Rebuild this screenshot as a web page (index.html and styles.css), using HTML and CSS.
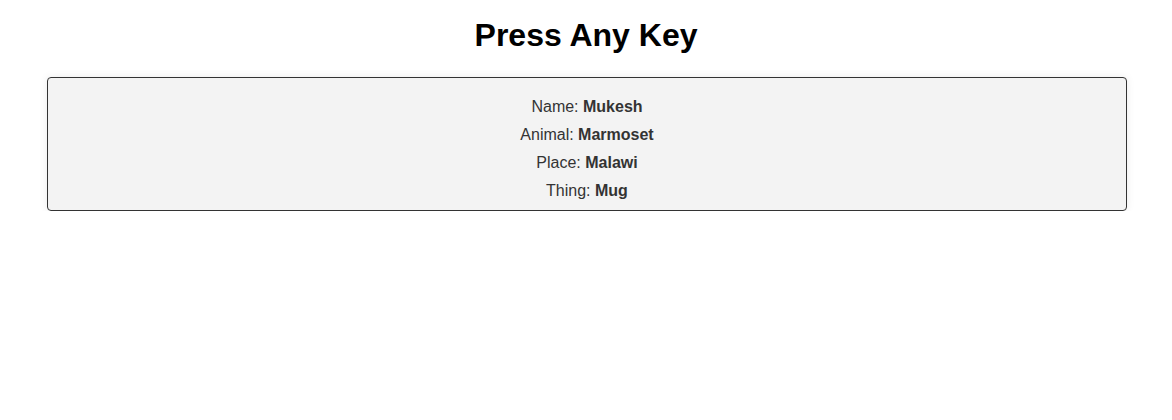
FILE: index.html
```html
<!DOCTYPE html>
<html>
<head>
<meta charset="utf-8">
<link rel="stylesheet" href="styles.css">
</head>
<body>
<h1 class="title">Press Any Key</h1>
<div class="card">
  <div class="row">Name: <b>Mukesh</b></div>
  <div class="row">Animal: <b>Marmoset</b></div>
  <div class="row">Place: <b>Malawi</b></div>
  <div class="row">Thing: <b>Mug</b></div>
</div>
</body>
</html>
```
FILE: styles.css
```css
body {
  margin: 0;
  font-family: "Liberation Sans", Arial, sans-serif;
  background: #fff;
}
.title {
  margin: 17px 0 23px;
  font-size: 32px;
  text-align: center;
  color: #000;
}
.card {
  margin: 0 45px 0 47px;
  border: 1px solid #333;
  border-radius: 4px;
  background: #f3f3f3;
  box-shadow: 0 0 8px rgba(0,0,0,0.08);
  padding: 15px 0 5px;
  text-align: center;
  color: #333;
  font-size: 16px;
}
.row {
  line-height: 28px;
}
```
